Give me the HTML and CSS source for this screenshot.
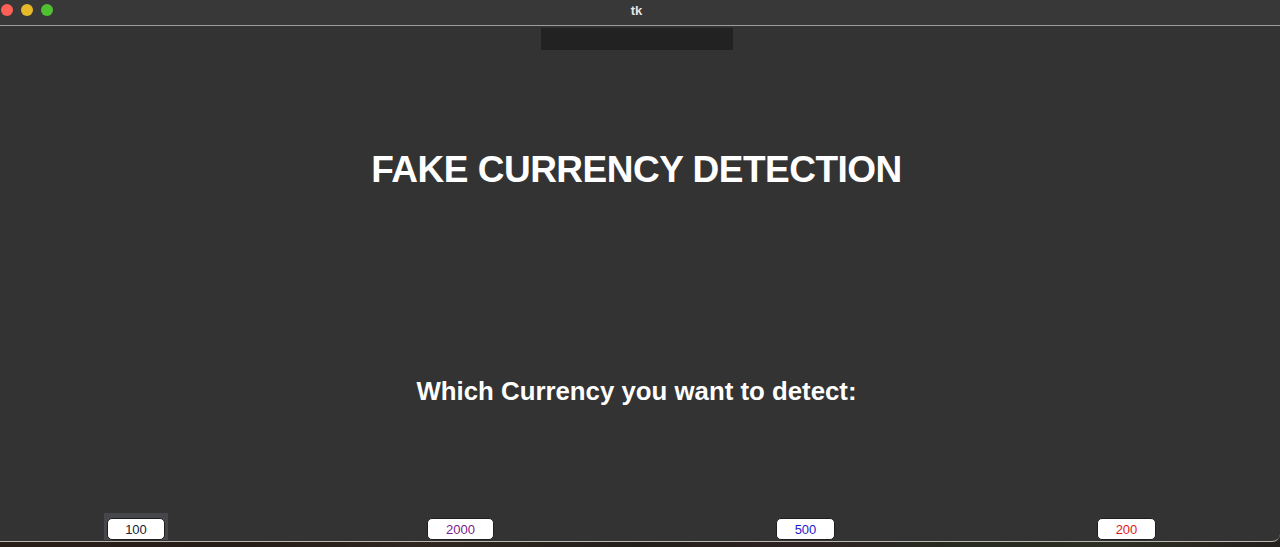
FILE: index.html
```html
<!DOCTYPE html>
<html>
<head>
<meta charset="utf-8">
<title>tk</title>
<link rel="stylesheet" href="styles.css">
</head>
<body>
<div class="window">
  <div class="titlebar">
    <div class="lights">
      <span class="light red"></span>
      <span class="light yellow"></span>
      <span class="light green"></span>
    </div>
    <div class="wintitle">tk</div>
  </div>
  <div class="content">
    <div class="topbox"></div>
    <h1 class="title">FAKE CURRENCY DETECTION</h1>
    <h2 class="subtitle">Which Currency you want to detect:</h2>
    <div class="buttons">
      <div class="focus"><button class="btn b100">100</button></div>
      <button class="btn b2000">2000</button>
      <button class="btn b500">500</button>
      <button class="btn b200">200</button>
    </div>
  </div>
</div>
<div class="desktop"></div>
</body>
</html>
```
FILE: styles.css
```css
html, body {
  margin: 0;
  padding: 0;
  width: 1280px;
  height: 547px;
  overflow: hidden;
  background: #2a221c;
  font-family: "Liberation Sans", Arial, sans-serif;
}
.window {
  width: 1280px;
  background: #333333;
  border-bottom: 1px solid #b8b6b0;
  border-bottom-right-radius: 8px;
  display: flex;
  flex-direction: column;
  box-sizing: border-box;
  height: 542px;
}
.titlebar {
  flex: none;
  background: #383838;
  border-bottom: 1px solid #9c9c9c;
  box-sizing: border-box;
  height: 26px;
  position: relative;
  display: flex;
  align-items: center;
  justify-content: center;
  padding-right: 7px;
}
.lights {
  position: absolute;
  left: 1px;
  top: 4px;
  display: flex;
  gap: 8px;
}
.light {
  width: 12px;
  height: 12px;
  border-radius: 50%;
  display: block;
}
.red { background: #fe5f57; }
.yellow { background: #e6b928; }
.green { background: #4fc130; }
.wintitle {
  color: #e6e6e6;
  font-weight: bold;
  font-size: 13px;
  margin-top: -5px;
}
.content {
  flex: 1;
  display: flex;
  flex-direction: column;
  align-items: center;
  padding-right: 7px;
}
.topbox {
  margin-top: 2px;
  width: 192px;
  height: 22px;
  background: #222222;
}
.title {
  margin: 101px 0 0 0;
  font-size: 37px;
  line-height: 37px;
  letter-spacing: -0.5px;
  font-weight: bold;
  color: #ffffff;
}
.subtitle {
  margin: 190px 0 0 0;
  font-size: 25.8px;
  line-height: 26px;
  font-weight: bold;
  color: #ffffff;
}
.buttons {
  margin-top: auto;
  align-self: stretch;
  display: flex;
  align-items: flex-end;
  padding-left: 104px;
  padding-bottom: 1px;
}
.focus {
  background: #45474c;
  padding: 5px 3px 0 3px;
  display: flex;
}
.btn {
  height: 22px;
  background: #ffffff;
  border: 1px solid #1e1e1e;
  border-radius: 5px;
  font-family: "Liberation Sans", Arial, sans-serif;
  font-size: 13px;
  padding: 0;
  box-sizing: border-box;
}
.b100 { width: 58px; color: #1a2030; }
.b2000 { width: 67px; color: #7a1a8a; margin-left: 259px; }
.b500 { width: 59px; color: #1a1ad0; margin-left: 282px; }
.b200 { width: 59px; color: #e01818; margin-left: 262px; }
.desktop {
  height: 6px;
  background: linear-gradient(90deg, #2a1e18 0%, #261c18 20%, #302620 32%, #221e1a 50%, #2e2222 62%, #262a20 75%, #2e2e24 88%, #221e1a 100%);
}
```
